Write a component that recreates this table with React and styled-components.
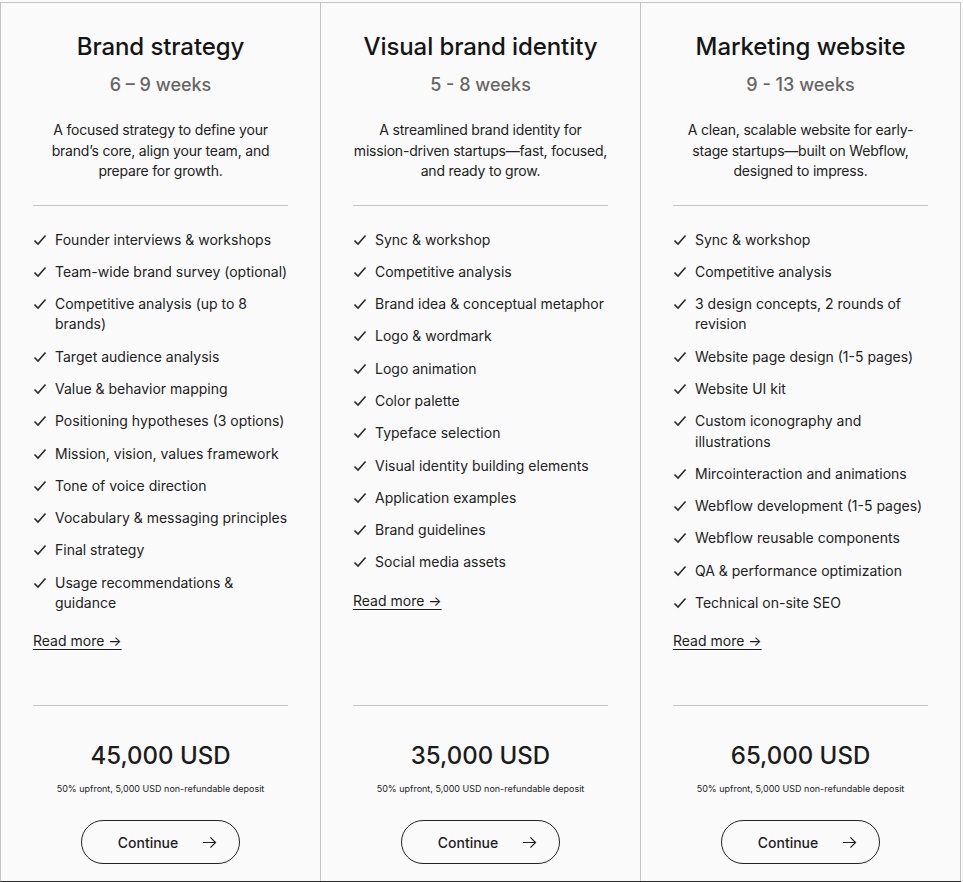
import styled, { createGlobalStyle } from "styled-components";

const plans = [
  {
    title: "Brand strategy",
    duration: "6 – 9 weeks",
    text: "A focused strategy to define your brand’s core, align your team, and prepare for growth.",
    items: [
      "Founder interviews & workshops",
      "Team-wide brand survey (optional)",
      "Competitive analysis (up to 8 brands)",
      "Target audience analysis",
      "Value & behavior mapping",
      "Positioning hypotheses (3 options)",
      "Mission, vision, values framework",
      "Tone of voice direction",
      "Vocabulary & messaging principles",
      "Final strategy",
      "Usage recommendations & guidance",
    ],
    price: "45,000 USD",
  },
  {
    title: "Visual brand identity",
    duration: "5 - 8 weeks",
    text: "A streamlined brand identity for mission-driven startups—fast, focused, and ready to grow.",
    items: [
      "Sync & workshop",
      "Competitive analysis",
      "Brand idea & conceptual metaphor",
      "Logo & wordmark",
      "Logo animation",
      "Color palette",
      "Typeface selection",
      "Visual identity building elements",
      "Application examples",
      "Brand guidelines",
      "Social media assets",
    ],
    price: "35,000 USD",
  },
  {
    title: "Marketing website",
    duration: "9 - 13 weeks",
    text: "A clean, scalable website for early-stage startups—built on Webflow, designed to impress.",
    items: [
      "Sync & workshop",
      "Competitive analysis",
      "3 design concepts, 2 rounds of revision",
      "Website page design (1-5 pages)",
      "Website UI kit",
      "Custom iconography and illustrations",
      "Mircointeraction and animations",
      "Webflow development (1-5 pages)",
      "Webflow reusable components",
      "QA & performance optimization",
      "Technical on-site SEO",
    ],
    price: "65,000 USD",
  },
];

const Check = () => (
  <CheckIcon viewBox="0 0 14 12" width="14" height="12">
    <polyline points="1.5,6.5 5,10 12.5,1.5" fill="none" stroke="#2a2a2a" strokeWidth="1.6" />
  </CheckIcon>
);

const Arrow = () => (
  <svg viewBox="0 0 16 14" width="15" height="13">
    <path d="M1 7 H14.5 M9 1.5 L14.5 7 L9 12.5" fill="none" stroke="#222" strokeWidth="1.3" />
  </svg>
);

const App = () => {
  return (
    <>
      <Global />
      <Wrapper>
        {plans.map((p) => (
          <Column key={p.title}>
            <Top>
              <Title>{p.title}</Title>
              <Duration>{p.duration}</Duration>
              <Desc>{p.text}</Desc>
              <Rule $gap={23} />
              <List>
                {p.items.map((it) => (
                  <Item key={it}>
                    <Check />
                    <span>{it}</span>
                  </Item>
                ))}
              </List>
              <ReadMore href="#">Read more →</ReadMore>
            </Top>
            <Bottom>
              <Rule />
              <Price>{p.price}</Price>
              <Note>50% upfront, 5,000 USD non-refundable deposit</Note>
              <Button>
                Continue
                <Arrow />
              </Button>
            </Bottom>
          </Column>
        ))}
      </Wrapper>
    </>
  );
};

const Global = createGlobalStyle`
  body {
    margin: 0;
    padding-top: 2px;
    background: #fafafa;
    font-family: Inter, "Noto Sans", sans-serif;
    color: #1c1c1c;
  }
`;

const Wrapper = styled.div`
  display: grid;
  grid-template-columns: repeat(3, 320px);
  min-height: 880px;
  width: 961px;
  border-top: 1px solid #c4c4c4;
  border-left: 1px solid #c4c4c4;
  border-bottom: 1px solid #2b2b2b;
  box-sizing: border-box;
`;

const Column = styled.div`
  display: flex;
  flex-direction: column;
  padding: 29px 32px 17px;
  border-right: 1px solid #c4c4c4;
  box-sizing: border-box;
`;

const Top = styled.div`
  display: flex;
  flex-direction: column;
`;

const Title = styled.h2`
  margin: 0;
  font-size: 24px;
  line-height: 30px;
  font-weight: 500;
  text-align: center;
  color: #151515;
  letter-spacing: -0.1px;
`;

const Duration = styled.div`
  margin-top: 11px;
  font-size: 18px;
  line-height: 24px;
  font-weight: 500;
  text-align: center;
  color: #666;
`;

const Desc = styled.p`
  margin: 23px 0 0;
  font-size: 14px;
  line-height: 20.5px;
  letter-spacing: -0.2px;
  text-align: center;
  color: #222;
`;

const Rule = styled.hr`
  width: 100%;
  margin: ${(p) => p.$gap || 0}px 0 0;
  border: none;
  border-top: 1px solid #c4c4c4;
`;

const List = styled.ul`
  list-style: none;
  margin: 24px 0 0;
  padding: 0;
  display: flex;
  flex-direction: column;
  gap: 12px;
`;

const Item = styled.li`
  display: flex;
  align-items: flex-start;
  gap: 8px;
  font-size: 14px;
  line-height: 20.3px;
  color: #222;
`;

const CheckIcon = styled.svg`
  flex: none;
  margin-top: 4px;
`;

const ReadMore = styled.a`
  margin-top: 18px;
  align-self: flex-start;
  font-size: 14px;
  line-height: 20px;
  color: #1c1c1c;
  text-decoration: underline;
  text-underline-offset: 3px;
`;

const Bottom = styled.div`
  margin-top: auto;
  display: flex;
  flex-direction: column;
  align-items: center;
`;

const Price = styled.div`
  margin-top: 35px;
  font-size: 24px;
  line-height: 30px;
  font-weight: 500;
  color: #1c1c1c;
`;

const Note = styled.div`
  margin-top: 12px;
  font-size: 9px;
  line-height: 12px;
  color: #222;
`;

const Button = styled.button`
  margin-top: 25px;
  width: 159px;
  height: 44px;
  display: flex;
  align-items: center;
  justify-content: center;
  gap: 24px;
  padding: 0 0 0 14px;
  background: transparent;
  border: 1.5px solid #222;
  border-radius: 22px;
  font-family: inherit;
  font-size: 14px;
  font-weight: 500;
  color: #1c1c1c;
  cursor: pointer;
`;

export default App;
